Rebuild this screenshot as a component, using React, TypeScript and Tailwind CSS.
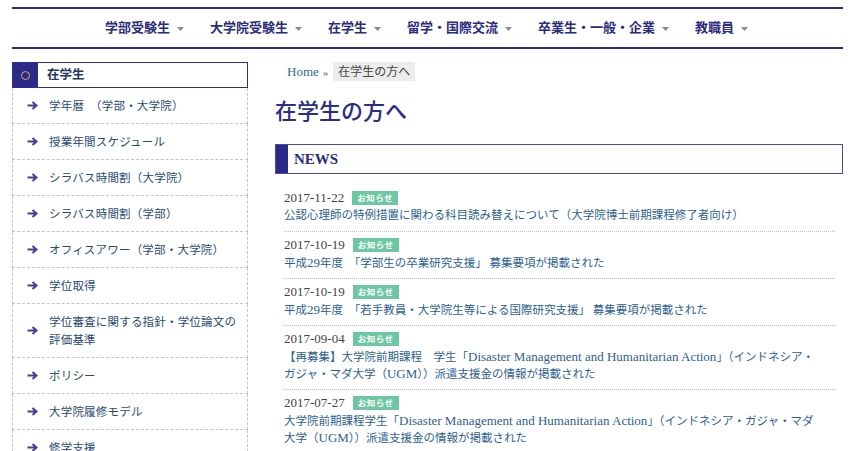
import React from "react";

const FONT = { fontFamily: '"Liberation Serif", "Noto Sans CJK JP", serif' };

const navItems = ["学部受験生", "大学院受験生", "在学生", "留学・国際交流", "卒業生・一般・企業", "教職員"];

const sideItems: string[][] = [
  ["学年暦　（学部・大学院）"],
  ["授業年間スケジュール"],
  ["シラバス時間割（大学院）"],
  ["シラバス時間割（学部）"],
  ["オフィスアワー（学部・大学院）"],
  ["学位取得"],
  ["学位審査に関する指針・学位論文の", "評価基準"],
  ["ポリシー"],
  ["大学院履修モデル"],
  ["修学支援"],
];

const news: { date: string; lines: string[] }[] = [
  { date: "2017-11-22", lines: ["公認心理師の特例措置に関わる科目読み替えについて（大学院博士前期課程修了者向け）"] },
  { date: "2017-10-19", lines: ["平成29年度　「学部生の卒業研究支援」 募集要項が掲載された"] },
  { date: "2017-10-19", lines: ["平成29年度　「若手教員・大学院生等による国際研究支援」 募集要項が掲載された"] },
  {
    date: "2017-09-04",
    lines: [
      "【再募集】大学院前期課程　学生「Disaster Management and Humanitarian Action」（インドネシア・",
      "ガジャ・マダ大学（UGM））派遣支援金の情報が掲載された",
    ],
  },
  {
    date: "2017-07-27",
    lines: [
      "大学院前期課程学生「Disaster Management and Humanitarian Action」（インドネシア・ガジャ・マダ",
      "大学（UGM））派遣支援金の情報が掲載された",
    ],
  },
];

function Mixed({ text }: { text: string }) {
  const parts = text.split(/([A-Za-z0-9][A-Za-z0-9 ]*[A-Za-z0-9]|[A-Za-z0-9])/);
  return (
    <>
      {parts.map((p, i) =>
        i % 2 === 1 ? (
          <span key={i} className="text-[13px]">
            {p}
          </span>
        ) : (
          <span key={i}>{p}</span>
        )
      )}
    </>
  );
}

function Caret() {
  return (
    <svg width="7" height="4" viewBox="0 0 7 4" className="ml-[7px] mt-[2px]">
      <path d="M0 0 L7 0 L3.5 4 Z" fill="#8a8a8a" />
    </svg>
  );
}

function Arrow() {
  return (
    <svg width="11" height="9" viewBox="0 0 11 9" className="shrink-0">
      <path d="M0.5 4.5 H9 M5.5 1 L9.5 4.5 L5.5 8" stroke="#4a3a96" strokeWidth="2" fill="none" />
    </svg>
  );
}

export default function App() {
  return (
    <div className="w-[850px] h-[451px] overflow-hidden bg-white" style={FONT}>
      <div className="mx-[12px] w-[831px] pt-[7px]">
        {/* top nav */}
        <div className="border-t-2 border-b-2 border-[#2e2d8c] h-[42px] flex items-center justify-center gap-[26px] pr-[2px]">
          {navItems.map((t) => (
            <div key={t} className="flex items-center text-[13px] font-bold text-[#2b2d7c]">
              <span>{t}</span>
              <Caret />
            </div>
          ))}
        </div>

        <div className="flex mt-[13px]">
          {/* sidebar */}
          <div className="w-[236px] shrink-0">
            <div className="flex h-[26px] border border-[#2e2d8c]">
              <div className="w-[25px] bg-[#2b2a88] flex items-center justify-center">
                <div className="w-[9px] h-[9px] rounded-full border border-[#d4b44a]" />
              </div>
              <div className="flex items-center pl-[9px] text-[12.5px] font-bold text-[#22365e]">在学生</div>
            </div>
            {sideItems.map((lines, i) => (
              <div
                key={i}
                className={`flex items-center border-b border-l border-r border-dashed border-[#c4c4c4] pl-[14px] ${
                  lines.length > 1 ? "h-[54px]" : "h-[36px]"
                }`}
              >
                <Arrow />
                <div className="ml-[11px] text-[11.5px] leading-[18px] text-[#2a4a72] whitespace-nowrap tracking-[0.2px]">
                  {lines.map((l) => (
                    <div key={l}>{l}</div>
                  ))}
                </div>
              </div>
            ))}
          </div>

          {/* main */}
          <div className="ml-[27px] flex-1">
            <div className="flex items-center pl-[12px] text-[13px]">
              <span className="text-[#2a6a9a]">Home</span>
              <span className="text-[#666] ml-[4px] text-[11px]">»</span>
              <span className="ml-[5px] bg-[#ececec] px-[5px] h-[19px] flex items-center text-[12px] text-[#444]">
                在学生の方へ
              </span>
            </div>

            <h1 className="mt-[16px] text-[22px] leading-[28px] font-medium text-[#2b2d86]">在学生の方へ</h1>

            <div className="mt-[18px] flex h-[30px] border border-[#4b4ba8]">
              <div className="w-[12px] bg-[#2b2a88]" />
              <div className="flex items-center pl-[6px] pt-[2px] text-[15px] font-bold text-[#2b2d7c]">NEWS</div>
            </div>

            <div className="pl-[9px] pr-[8px] pt-[16px]">
              {news.map((n, i) => (
                <div
                  key={i}
                  className={`pb-[7px] mb-[5px] ${i < news.length - 1 ? "border-b border-dotted border-[#bdbdbd]" : ""}`}
                >
                  <div className="flex items-center h-[17px]">
                    <span className="text-[13px] text-[#444]">{n.date}</span>
                    <span className="ml-[8px] bg-[#6cc7a2] text-white text-[8.5px] font-bold px-[5px] h-[14px] flex items-center tracking-[0.5px]">
                      お知らせ
                    </span>
                  </div>
                  <div className="text-[11.5px] leading-[17px] text-[#2d5f92] whitespace-nowrap">
                    {n.lines.map((l) => (
                      <div key={l} className="h-[17px]">
                        <Mixed text={l} />
                      </div>
                    ))}
                  </div>
                </div>
              ))}
            </div>
          </div>
        </div>
      </div>
    </div>
  );
}
